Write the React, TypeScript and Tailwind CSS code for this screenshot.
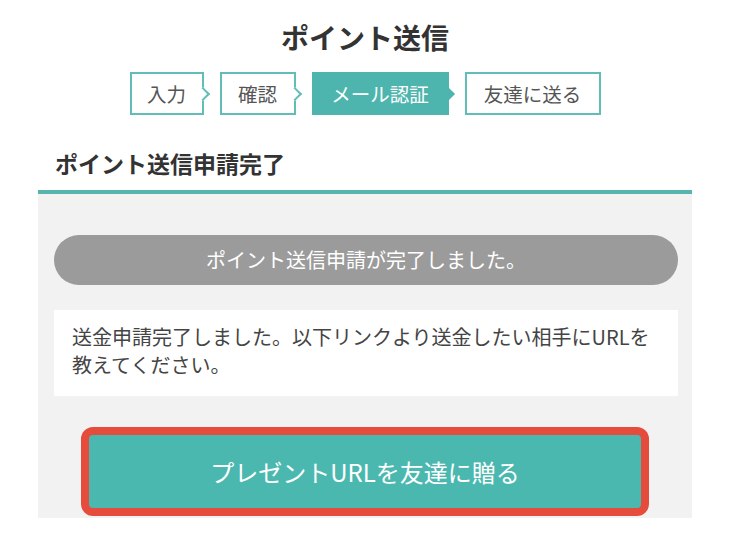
import React from "react";

const steps = [
  { label: "入力", w: "w-[74px]", active: false, arrow: true },
  { label: "確認", w: "w-[76px]", active: false, arrow: true },
  { label: "メール認証", w: "w-[137px]", active: true, arrow: true },
  { label: "友達に送る", w: "w-[136px]", active: false, arrow: false },
];

const App = () => {
  return (
    <div
      className="w-[750px] h-[540px] bg-white overflow-hidden"
      style={{ fontFamily: '"Noto Sans CJK JP", "Noto Sans", sans-serif' }}
    >
      <div className="ml-[38px] w-[654px] flex flex-col">
        {/* タイトル */}
        <h1 className="mt-[17px] h-[40px] leading-[40px] text-center text-[28px] font-bold text-[#333]">
          ポイント送信
        </h1>

        {/* ステップ */}
        <div className="mt-[15px] flex justify-center gap-[16px]">
          {steps.map((s) => (
            <div
              key={s.label}
              className={`relative h-[43px] ${s.w} flex items-center justify-center text-[19.5px] border-2 ${
                s.active
                  ? "bg-[#4db5ad] border-[#4db5ad] text-white"
                  : "bg-white border-[#62bdb6] text-[#555]"
              }`}
            >
              {s.label}
              {s.arrow && (
                <span
                  className={`absolute right-[-6px] top-1/2 -mt-[5px] w-[10px] h-[10px] rotate-45 ${
                    s.active
                      ? "bg-[#4db5ad]"
                      : "bg-white border-t-2 border-r-2 border-[#62bdb6]"
                  }`}
                />
              )}
            </div>
          ))}
        </div>

        {/* 見出し */}
        <h2 className="mt-[32px] pl-[17px] h-[32px] leading-[32px] text-[23px] font-bold text-[#333]">
          ポイント送信申請完了
        </h2>
        <div className="mt-[11px] h-[4px] bg-[#55b5ae]" />

        {/* 本文 */}
        <div className="bg-[#f2f2f2] pt-[41px] pb-[2px]">
          <div className="ml-[16px] mr-[14px] h-[50px] rounded-full bg-[#9b9b9b] flex items-center justify-center text-white text-[20px]">
            ポイント送信申請が完了しました。
          </div>

          <div className="mt-[25px] ml-[16px] mr-[14px] h-[86px] bg-white pl-[18px] pr-[20px] pt-[13px] text-[20px] leading-[28px] text-[#444]">
            送金申請完了しました。以下リンクより送金したい相手にURLを教えてください。
          </div>

          <div className="mt-[31px] mx-[43px] h-[89px] rounded-[12px] border-[8px] border-[#e64c3c] bg-[#4bb8b0] flex items-center justify-center text-white text-[24px]">
            プレゼントURLを友達に贈る
          </div>
        </div>
      </div>
    </div>
  );
};

export default App;
